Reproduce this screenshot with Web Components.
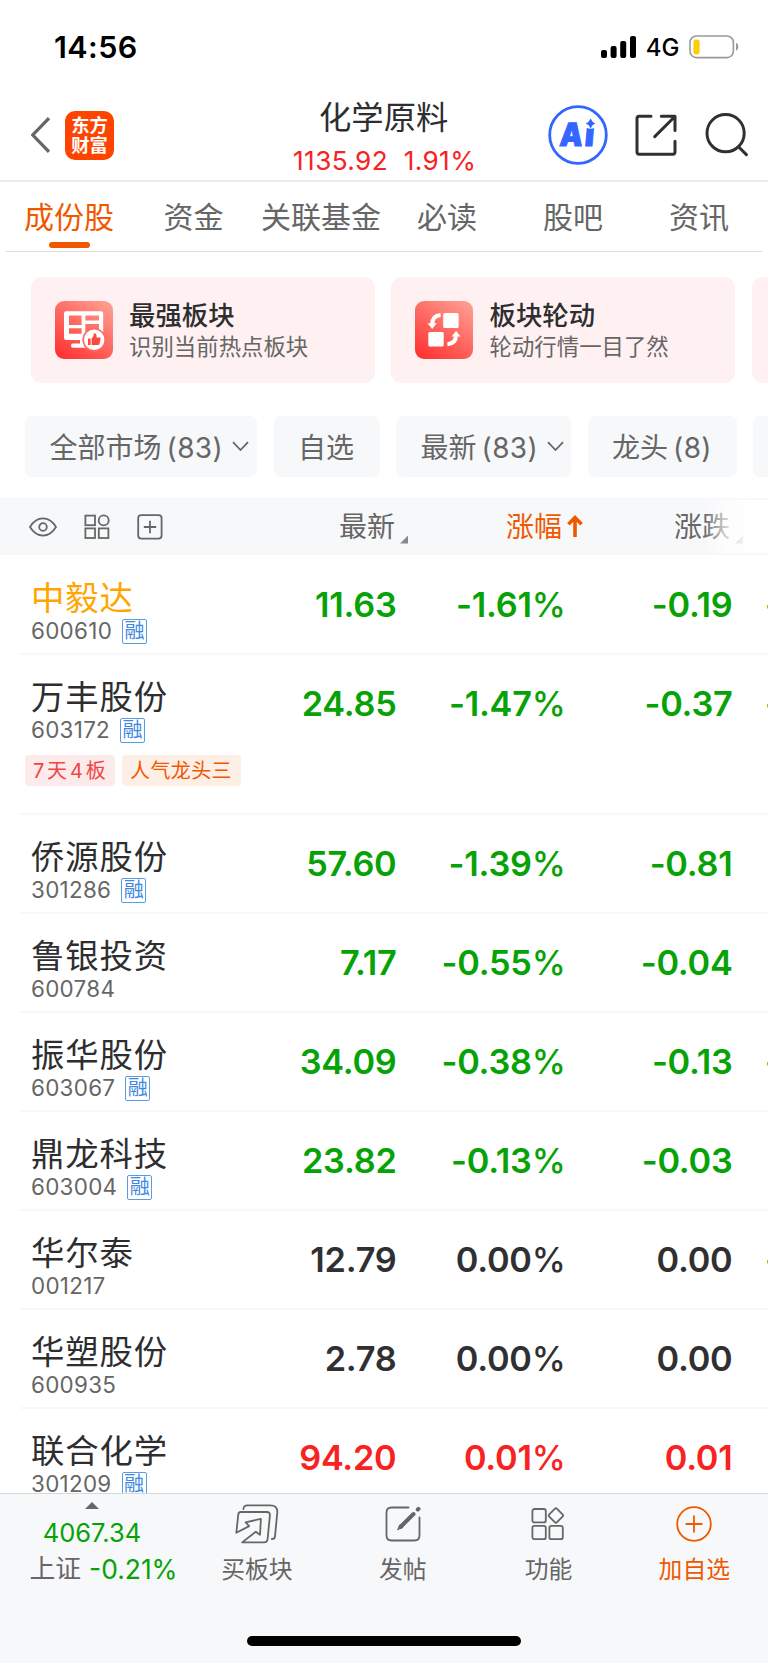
<!DOCTYPE html>
<html lang="zh-CN">
<head>
<meta charset="utf-8">
<title>化学原料</title>
<style>
  :root {
    --up: #f82222;
    --down: #06a206;
    --flat: #303032;
    --accent: #f05800;
    --ink: #2e2e30;
    --muted: #666;
    --panel: #f7f8fa;
  }
  html, body { margin: 0; padding: 0; }
  body {
    width: 768px;
    height: 1663px;
    overflow: hidden;
    background: #fff;
    color: var(--ink);
    font-family: Inter, "Noto Sans CJK SC", sans-serif;
  }
</style>
</head>
<body>
<stock-app></stock-app>

<script>
'use strict';

/* Shared base: opens the shadow root and fills it from render() */
class BaseElement extends HTMLElement {
  connectedCallback() {
    if (this.shadowRoot) return;
    this.attachShadow({ mode: 'open' });
    this.shadowRoot.innerHTML = this.render();
  }
}

/* ── Status bar ─────────────────────────────────────────── */
class StatusBar extends BaseElement {
  render() {
    return `
      <style>
        :host {
          display: flex;
          height: 96px;
          box-sizing: border-box;
          padding: 27px 29px 29px 54px;
          align-items: center;
          justify-content: space-between;
          color: #000;
        }
        .time { font-size: 30.5px; font-weight: 600; line-height: 40px; letter-spacing: 0.4px; }
        .right { display: flex; align-items: center; gap: 9.5px; }
        .net { font-size: 24px; font-weight: 500; line-height: 40px; padding-top: 2px; }
        svg { display: block; }
      </style>
      <span class="time">14:56</span>
      <div class="right">
        <svg width="35" height="22" viewBox="0 0 35 22">
          <rect x="0" y="14" width="6" height="8" rx="2"/>
          <rect x="9.6" y="10" width="6" height="12" rx="2"/>
          <rect x="19.2" y="5" width="6" height="17" rx="2"/>
          <rect x="29" y="0" width="6" height="22" rx="2"/>
        </svg>
        <span class="net">4G</span>
        <svg width="50" height="24" viewBox="0 0 50 24">
          <rect x="1" y="1" width="43.4" height="21.6" rx="6.5" fill="none" stroke="#999" stroke-width="1.6"/>
          <rect x="4.4" y="4.4" width="6.2" height="15" rx="2.6" fill="#fc0"/>
          <path d="M47 7.8c3 1.2 3 6.8 0 8z" fill="#999"/>
        </svg>
      </div>
    `;
  }
}
customElements.define('status-bar', StatusBar);

/* ── Title bar ──────────────────────────────────────────── */
class TitleBar extends BaseElement {
  render() {
    return `
      <style>
        :host {
          display: grid;
          grid-template-columns: 1fr 220px 1fr;
          align-items: center;
          height: 86px;
          box-sizing: border-box;
          border-bottom: 2px solid #ececec;
          padding: 0 19.2px 0 30.5px;
        }
        .left { display: flex; align-items: center; gap: 15.5px; padding-bottom: 6px; }
        .logo {
          display: grid;
          place-content: center;
          width: 49px;
          height: 49px;
          border-radius: 10px;
          background: #ff4400;
          color: #fff;
          font-size: 18.3px;
          font-weight: 700;
          line-height: 20px;
          text-align: center;
        }
        .mid { align-self: start; padding-top: 1px; text-align: center; transform: translateX(-6px); }
        .name { font-size: 32.3px; line-height: 42px; }
        .quote { margin: 4px -10px 0 -8px; font-size: 26.2px; letter-spacing: 0.4px; line-height: 36px; white-space: pre; color: var(--up); }
        .right { display: flex; align-items: center; justify-content: flex-end; gap: 28.2px; padding-bottom: 6px; }
        svg { display: block; flex: none; }
        .ai { margin-right: -2px; }
      </style>
      <div class="left">
        <svg width="19" height="36" viewBox="0 0 19 36" fill="none" stroke="#666" stroke-width="3.2">
          <path d="M18 1.2 1.8 18 18 34.8"/>
        </svg>
        <div class="logo">东方<br>财富</div>
      </div>
      <div class="mid">
        <div class="name">化学原料</div>
        <div class="quote">1135.92  1.91%</div>
      </div>
      <div class="right">
        <svg class="ai" width="60" height="60" viewBox="0 0 60 60">
          <circle cx="30" cy="30" r="28.3" fill="none" stroke="#3366ff" stroke-width="2.8"/>
          <text transform="translate(11 41) skewX(-5)" font-family="Inter, sans-serif" font-size="32" font-weight="900" fill="#3366ff" stroke="#3366ff" stroke-width="1"><tspan textLength="23" lengthAdjust="spacingAndGlyphs">A</tspan><tspan x="25">i</tspan></text>
          <circle cx="42.6" cy="17.4" r="6.4" fill="#fff"/>
          <path fill="#3366ff" d="M42.6 13.6q1.4 3.6 4.8 4.9-3.4 1.3-4.8 4.9-1.4-3.6-4.8-4.9 3.4-1.3 4.8-4.9z"/>
        </svg>
        <svg width="42" height="42" viewBox="0 0 42 42" fill="none" stroke="#303032" stroke-width="3" stroke-linecap="round" stroke-linejoin="round">
          <path d="M16 2.3H4.2Q2 2.3 2 4.5v33.6q0 2.2 2.2 2.2h33.6q2.2 0 2.2-2.2V27.2M26.3 2.3H40v14.2M39.4 3 19.7 22.6"/>
        </svg>
        <svg width="44" height="44" viewBox="0 0 44 44" fill="none" stroke="#303032" stroke-width="3" stroke-linecap="round">
          <circle cx="20.6" cy="20.2" r="18.6"/>
          <path d="M34 34.2 41.4 41.6"/>
        </svg>
      </div>
    `;
  }
}
customElements.define('title-bar', TitleBar);

/* ── Tabs ───────────────────────────────────────────────── */
class TabBar extends BaseElement {
  render() {
    return `
      <style>
        :host {
          display: grid;
          grid-template-columns: repeat(6, 126px);
          height: 70px;
          box-sizing: border-box;
          margin: 0 6px;
          border-bottom: 1px solid #ddd;
        }
        span {
          display: flex;
          flex-direction: column;
          align-items: center;
          padding-top: 14px;
          font-size: 30px;
          line-height: 42px;
          white-space: nowrap;
          color: var(--muted);
        }
        span:nth-child(3) { margin-left: -3px; }
        .on { color: var(--accent); }
        .on::after {
          content: "";
          width: 41px;
          height: 6px;
          margin-top: 4px;
          border-radius: 3px;
          background: var(--accent);
        }
      </style>
      <span class="on">成份股</span><span>资金</span><span>关联基金</span><span>必读</span><span>股吧</span><span>资讯</span>
    `;
  }
}
customElements.define('tab-bar', TabBar);

/* ── Promo card: icon in slot, title and sub by attribute ─ */
class PromoCard extends BaseElement {
  render() {
    return `
      <style>
        :host {
          display: flex;
          flex: none;
          align-items: center;
          gap: 16.5px;
          width: 344px;
          height: 106px;
          box-sizing: border-box;
          padding-left: 24px;
          border-radius: 11px;
          background: #fff1f1;
          white-space: nowrap;
        }
        .title { font-size: 26.4px; font-weight: 500; line-height: 34px; margin-top: -1px; }
        .sub { font-size: 22.4px; line-height: 30px; color: var(--muted); }
      </style>
      <slot></slot>
      <div>
        <div class="title">${this.getAttribute('title-text') || ''}</div>
        <div class="sub">${this.getAttribute('sub') || ''}</div>
      </div>
    `;
  }
}
customElements.define('promo-card', PromoCard);

/* ── Filter chip ────────────────────────────────────────── */
class FilterChip extends BaseElement {
  render() {
    const count = this.getAttribute('count');
    return `
      <style>
        :host {
          display: flex;
          flex: none;
          align-items: center;
          height: 61px;
          box-sizing: border-box;
          padding: 2px 0 0 24.5px;
          border-radius: 7px;
          background: var(--panel);
          color: var(--muted);
          font-size: 28px;
          line-height: 40px;
          white-space: nowrap;
        }
        .count { margin-left: 5px; letter-spacing: 0.4px; }
        svg { margin: -3px 0 0 9px; }
      </style>
      <slot></slot>
      ${count ? `<span class="count">(${count})</span>` : ''}
      ${this.hasAttribute('menu') ? `
        <svg width="17" height="11" viewBox="0 0 17 11" fill="none" stroke="#666" stroke-width="1.8">
          <path d="M1 1.2 8.5 9 16 1.2"/>
        </svg>` : ''}
    `;
  }
}
customElements.define('filter-chip', FilterChip);

/* ── Table head ─────────────────────────────────────────── */
class TableHead extends BaseElement {
  render() {
    return `
      <style>
        :host {
          display: grid;
          grid-template-columns: 228px 180px 175px 185px;
          position: relative;
          height: 57px;
          background: var(--panel);
          color: var(--muted);
          font-size: 28px;
          line-height: 60px;
        }
        .tools { display: flex; align-items: center; gap: 27px; height: 57px; padding: 0 0 0 29px; }
        .tools svg { display: block; flex: none; }
        .col { display: flex; justify-content: flex-end; align-items: center; gap: 5px; height: 58px; }
        .col.on { color: var(--accent); }
        .col svg { margin-bottom: 2px; }
        .tri { width: 8px; height: 8px; margin-top: 25px; background: #888; clip-path: polygon(100% 0, 100% 100%, 0 100%); }
        .last { padding-right: 25px; }
        .fade {
          position: absolute;
          right: 0;
          top: 2px;
          width: 64px;
          height: 53px;
          background: linear-gradient(90deg, rgba(255,255,255,0), rgba(255,255,255,.7) 34%, rgba(255,255,255,.85) 60%, #fff 80%);
        }
      </style>
      <div class="tools">
        <svg width="28" height="20" viewBox="0 0 28 20" fill="none" stroke="#666" stroke-width="1.8" stroke-linejoin="round">
          <path d="M1 10C8-1.4 20-1.4 27 10 20 21.4 8 21.4 1 10z"/><circle cx="14" cy="10" r="3.8"/>
        </svg>
        <svg width="26" height="26" viewBox="0 0 26 26" fill="none" stroke="#666" stroke-width="1.8">
          <rect x="1.4" y="1.6" width="9.6" height="9.6"/><circle cx="19.7" cy="6.4" r="5"/>
          <rect x="1.4" y="14.4" width="9.6" height="9.6"/><rect x="14.8" y="14.4" width="9.6" height="9.6"/>
        </svg>
        <svg width="26" height="26" viewBox="0 0 26 26" fill="none" stroke="#666" stroke-width="1.8">
          <rect x="1.2" y="1.2" width="23.4" height="23.4" rx="3"/><path d="M13 6.8v12.4M6.8 13h12.4"/>
        </svg>
      </div>
      <div class="col">最新<i class="tri"></i></div>
      <div class="col on">涨幅<svg width="16" height="22" viewBox="0 0 16 22" fill="none" stroke="#f05800" stroke-width="3.6"><path d="M8 22V3M1.4 9.2 8 2.6l6.6 6.6"/></svg></div>
      <div class="col last">涨跌<i class="tri"></i></div>
      <div class="fade"></div>
    `;
  }
}
customElements.define('table-head', TableHead);

/* ── Stock row ──────────────────────────────────────────── */
class StockRow extends BaseElement {
  render() {
    const a = (n) => this.getAttribute(n) || '';
    const pct = a('pct').replace('%', '<b>%</b>');
    return `
      <style>
        :host {
          display: block;
          height: 99px;
          box-sizing: border-box;
          margin-left: 20px;
          border-bottom: 2px solid #f8f8f9;
          color: var(--flat);
        }
        :host([tall]) { height: 160px; }
        :host([dir="down"]) { --c: var(--down); }
        :host([dir="up"]) { --c: var(--up); }
        .main {
          display: grid;
          grid-template-columns: 200px 176.5px 169px 167px 32.5px 1fr;
          height: 97px;
          overflow: hidden;
        }
        .id { padding: 21px 0 0 11px; white-space: nowrap; }
        .name { font-size: 33.4px; letter-spacing: 0.9px; line-height: 42px; color: var(--ink); }
        :host([mark]) .name { color: #ffa500; }
        .code { display: flex; align-items: center; gap: 10px; height: 24px; font-size: 22.4px; line-height: 24px; letter-spacing: 0.3px; color: var(--muted); }
        .badge {
          width: 25px;
          height: 25px;
          box-sizing: border-box;
          border: 1.5px solid #5a9be6;
          border-radius: 2px;
          color: #3f88dd;
          font-size: 20px;
          line-height: 22px;
          letter-spacing: 0;
          text-align: center;
        }
        .num { padding-top: 28px; font-size: 34.3px; letter-spacing: -0.25px; font-weight: 600; line-height: 42px; text-align: right; color: var(--c, var(--flat)); }
        .num b { font-weight: 500; }
        .more { text-align: left; color: var(--down); }
        .tags { display: flex; gap: 7px; padding: 3px 0 0 5px; }
      </style>
      <div class="main">
        <div class="id">
          <div class="name">${a('name')}</div>
          <div class="code">${a('code')}${this.hasAttribute('margin') ? '<span class="badge">融</span>' : ''}</div>
        </div>
        <div class="num">${a('price')}</div>
        <div class="num">${pct}</div>
        <div class="num">${a('chg')}</div>
        <span></span>
        ${this.hasAttribute('more') ? '<div class="num more">-</div>' : ''}
      </div>
      <div class="tags"><slot></slot></div>
    `;
  }
}
customElements.define('stock-row', StockRow);

/* ── Small tag under a stock ────────────────────────────── */
class StockTag extends BaseElement {
  render() {
    return `
      <style>
        :host {
          display: block;
          width: 90px;
          height: 31px;
          box-sizing: border-box;
          padding-left: 8px;
          border-radius: 4px;
          background: #fdeaeb;
          color: #f04545;
          font-size: 20px;
          letter-spacing: 2.8px;
          line-height: 33px;
          white-space: nowrap;
        }
        :host([hot]) { width: 119px; background: #fdeee6; color: var(--accent); letter-spacing: 0.4px; }
      </style>
      <slot></slot>
    `;
  }
}
customElements.define('stock-tag', StockTag);

/* ── Bottom bar ─────────────────────────────────────────── */
class BottomItem extends BaseElement {
  render() {
    return `
      <style>
        :host {
          display: flex;
          flex-direction: column;
          align-items: center;
          padding-top: 9px;
          color: var(--muted);
          font-size: 23.8px;
          line-height: 32px;
        }
        :host([on]) { color: var(--accent); }
        .icon { display: grid; place-items: center; height: 42px; margin-bottom: 9px; }
      </style>
      <div class="icon"><slot name="icon"></slot></div>
      <div><slot></slot></div>
    `;
  }
}
customElements.define('bottom-item', BottomItem);

class BottomBar extends BaseElement {
  render() {
    return `
      <style>
        :host {
          display: flex;
          flex-direction: column;
          justify-content: space-between;
          height: 170px;
          box-sizing: border-box;
          border-top: 1px solid #d5d9dc;
          background: var(--panel);
        }
        .items { display: grid; grid-template-columns: 184px repeat(4, 145.8px); }
        .index { display: flex; flex-direction: column; align-items: center; padding-top: 8px; font-size: 25.5px; white-space: nowrap; }
        .caret { width: 14px; height: 7px; background: #666; clip-path: polygon(50% 0, 100% 100%, 0 100%); }
        .value { color: var(--down); line-height: 34px; margin-top: 7px; }
        .line { display: flex; gap: 8px; line-height: 34px; margin: 2px 0 0 23px; font-size: 26.4px; color: var(--down); }
        .line span { color: var(--muted); font-size: 25.8px; }
        .home { align-self: center; width: 274px; height: 10px; margin-bottom: 17px; border-radius: 5px; background: #000; }
        svg { display: block; }
      </style>
      <div class="items">
        <div class="index">
          <i class="caret"></i>
          <div class="value">4067.34</div>
          <div class="line"><span>上证</span>-0.21%</div>
        </div>
        <bottom-item>
          <svg slot="icon" width="44" height="40" viewBox="0 0 44 40" fill="none" stroke="#666" stroke-width="1.8" stroke-linejoin="round" stroke-linecap="round">
            <path d="M8.3 5q.7-3.6 4-3.6h23q7.4 0 7 7L40 32.3q-.3 2.7-3.2 2.7"/>
            <path d="M5.8 8h26q3.4 0 3.1 3.6L32.6 35q-.3 3.4-3.6 3.4H7.2L20.8 27.8l4.2 3 .9-16-15.3 3.6 3.6 3.7L1.3 28.8 3.3 10.4Q3.6 8 5.8 8z"/>
          </svg>买板块</bottom-item>
        <bottom-item>
          <svg slot="icon" width="36" height="36" viewBox="0 0 36 36" fill="none" stroke="#666" stroke-width="1.8" stroke-linecap="round">
            <path d="M23.5 1.5H6.5q-5 0-5 5v23q0 5 5 5h23q5 0 5-5V11.5"/>
            <path d="M28.5 8 15.5 21" stroke-width="4"/><path d="M33.5 2.8l-.7.7" stroke-width="4"/><path d="M15 19 12.6 23.8 17.4 21.4z" fill="#666" stroke-width="1"/>
          </svg>发帖</bottom-item>
        <bottom-item>
          <svg slot="icon" width="34" height="34" viewBox="0 0 34 34" fill="none" stroke="#666" stroke-width="1.8" stroke-linejoin="round">
            <rect x="1.4" y="2" width="13.4" height="13.4" rx="2"/><rect x="1.4" y="18.8" width="13.4" height="13.4" rx="2"/>
            <rect x="18.4" y="18.8" width="13.4" height="13.4" rx="2"/><rect x="19.4" y="3" width="11" height="11" rx="1.6" transform="rotate(45 24.9 8.5)"/>
          </svg>功能</bottom-item>
        <bottom-item on>
          <svg slot="icon" width="36" height="36" viewBox="0 0 36 36" fill="none" stroke="#f05800" stroke-width="1.8">
            <circle cx="18" cy="18" r="16.8"/><path d="M18 9.6v16.8M9.6 18h16.8"/>
          </svg>加自选</bottom-item>
      </div>
      <div class="home"></div>
    `;
  }
}
customElements.define('bottom-bar', BottomBar);

/* ── Page ───────────────────────────────────────────────── */
const BOARD_ICON = `
  <svg width="58" height="58" viewBox="0 0 58 58">
    <defs><linearGradient id="g" x1="0.1" y1="1" x2="0.8" y2="0"><stop offset="0" stop-color="#fe3030"/><stop offset="1" stop-color="#ff9a8e"/></linearGradient></defs>
    <rect width="58" height="58" rx="9" fill="url(#g)"/>
    <path fill="#fff" fill-rule="evenodd" d="M11 10.2h35q2.2 0 2.2 2.2V36.5q0 2.5-2.2 2.5H11q-2 0-2-2.5V12.4q0-2.2 2-2.2zM14 14.6V24h12.6v-9.4zM30.4 14.6v5H44v-5zM14 27.2v5.6h12.6v-5.6zM30.4 23V33H44V23z"/>
    <rect x="25" y="38" width="4" height="5" fill="#fff"/><rect x="16" y="42.6" width="18" height="4.2" rx="2" fill="#fff"/>
    <circle cx="39.2" cy="38.8" r="11.8" fill="#fc6a62"/><circle cx="39.2" cy="38.8" r="10.2" fill="#fff"/>
    <path fill="#f94a44" d="M33 37.6h2.6V44H33zM36.6 37.6q2.6-2 2.2-5.2 3-.8 2.8 4.2h3.4q.8.2.6 1.2L44.4 43q-.3 1-1.2 1h-6.6z"/>
  </svg>`;
const ROTATE_ICON = `
  <svg width="58" height="58" viewBox="0 0 58 58">
    <defs><linearGradient id="h" x1="0.1" y1="1" x2="0.8" y2="0"><stop offset="0" stop-color="#fe3030"/><stop offset="1" stop-color="#ff9a8e"/></linearGradient></defs>
    <rect width="58" height="58" rx="9" fill="url(#h)"/>
    <g fill="#fff"><rect x="28.2" y="12" width="15.4" height="15" rx="1.6"/><rect x="13.3" y="31" width="15.4" height="14.6" rx="1.6"/>
    <path d="M12.6 22.3h9.2l-4.6 5.6zM36.6 35.5h9l-4.5-5.6z"/></g>
    <path d="M17.2 23.5q0-8.8 8.4-9.4M32.4 43.2q8.6-.7 8.6-9" fill="none" stroke="#fff" stroke-width="4"/>
  </svg>`;

class StockApp extends BaseElement {
  render() {
    return `
      <style>
        :host { display: flex; flex-direction: column; width: 768px; height: 1663px; overflow: hidden; background: #fff; }
        .cards { display: flex; gap: 16.5px; padding: 25px 0 33px 30.6px; overflow: hidden; }
        .cards svg { display: block; flex: none; }
        .chips { display: flex; gap: 16.5px; padding: 0 0 21px 25px; overflow: hidden; }
        .list { flex: 1; min-height: 0; padding-top: 1px; overflow: hidden; }
        status-bar, title-bar, tab-bar, .cards, .chips, table-head, bottom-bar { flex: none; }
      </style>
      <status-bar></status-bar>
      <title-bar></title-bar>
      <tab-bar></tab-bar>
      <div class="cards">
        <promo-card title-text="最强板块" sub="识别当前热点板块">${BOARD_ICON}</promo-card>
        <promo-card title-text="板块轮动" sub="轮动行情一目了然">${ROTATE_ICON}</promo-card>
        <promo-card></promo-card>
      </div>
      <div class="chips">
        <filter-chip count="83" menu style="width:232px">全部市场</filter-chip>
        <filter-chip style="width:106px">自选</filter-chip>
        <filter-chip count="83" menu style="width:175px">最新</filter-chip>
        <filter-chip count="8" style="width:149px">龙头</filter-chip>
        <filter-chip style="width:80px"></filter-chip>
      </div>
      <table-head></table-head>
      <div class="list">
        <stock-row mark margin more dir="down" name="中毅达" code="600610" price="11.63" pct="-1.61%" chg="-0.19"></stock-row>
        <stock-row tall margin more dir="down" name="万丰股份" code="603172" price="24.85" pct="-1.47%" chg="-0.37">
          <stock-tag>7天4板</stock-tag><stock-tag hot>人气龙头三</stock-tag>
        </stock-row>
        <stock-row margin dir="down" name="侨源股份" code="301286" price="57.60" pct="-1.39%" chg="-0.81"></stock-row>
        <stock-row dir="down" name="鲁银投资" code="600784" price="7.17" pct="-0.55%" chg="-0.04"></stock-row>
        <stock-row margin more dir="down" name="振华股份" code="603067" price="34.09" pct="-0.38%" chg="-0.13"></stock-row>
        <stock-row margin dir="down" name="鼎龙科技" code="603004" price="23.82" pct="-0.13%" chg="-0.03"></stock-row>
        <stock-row more name="华尔泰" code="001217" price="12.79" pct="0.00%" chg="0.00"></stock-row>
        <stock-row name="华塑股份" code="600935" price="2.78" pct="0.00%" chg="0.00"></stock-row>
        <stock-row margin dir="up" name="联合化学" code="301209" price="94.20" pct="0.01%" chg="0.01"></stock-row>
      </div>
      <bottom-bar></bottom-bar>
    `;
  }
}
customElements.define('stock-app', StockApp);
</script>
</body>
</html>
